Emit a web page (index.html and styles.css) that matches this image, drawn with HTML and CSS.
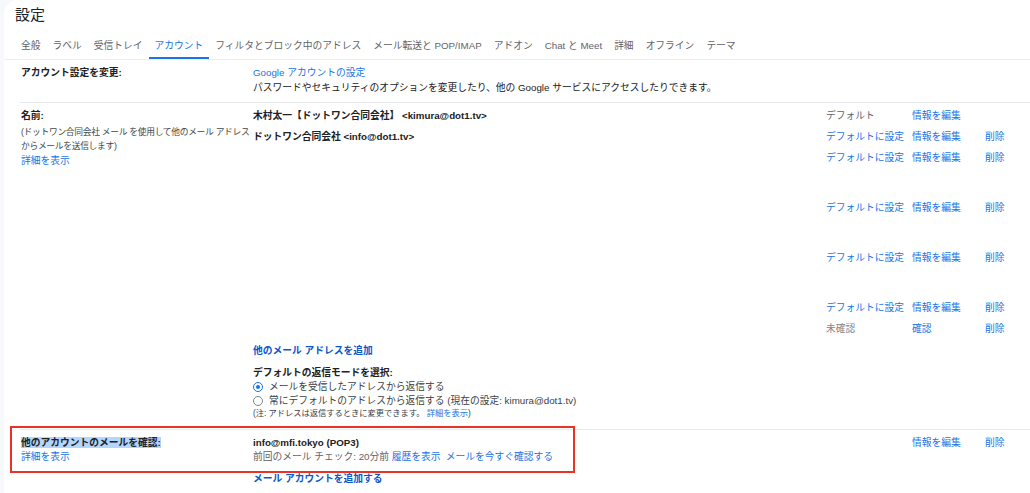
FILE: index.html
```html
<!DOCTYPE html>
<html lang="ja">
<head>
<meta charset="utf-8">
<title>設定</title>
<link rel="stylesheet" href="styles.css">
</head>
<body>
<div class="page">
  <div class="panel">
    <h1 class="title">設定</h1>
    <nav class="tabs">
      <span class="tab">全般</span>
      <span class="tab">ラベル</span>
      <span class="tab">受信トレイ</span>
      <span class="tab active">アカウント</span>
      <span class="tab">フィルタとブロック中のアドレス</span>
      <span class="tab">メール転送と POP/IMAP</span>
      <span class="tab">アドオン</span>
      <span class="tab">Chat と Meet</span>
      <span class="tab">詳細</span>
      <span class="tab">オフライン</span>
      <span class="tab">テーマ</span>
    </nav>

    <section class="row row-account">
      <div class="label"><div class="label-title">アカウント設定を変更:</div></div>
      <div class="value">
        <a class="link">Google アカウントの設定</a>
        <div class="text">パスワードやセキュリティのオプションを変更したり、他の Google サービスにアクセスしたりできます。</div>
      </div>
    </section>

    <section class="row row-names">
      <div class="label">
        <div class="label-title">名前:</div>
        <div class="label-desc">(ドットワン合同会社 メール を使用して他のメール アドレス<br>からメールを送信します)</div>
        <a class="link label-link">詳細を表示</a>
      </div>
      <div class="value">
        <div class="senders">
          <div class="entry">
            <span class="name">木村太一【ドットワン合同会社】 &lt;kimura@dot1.tv&gt;</span>
            <span class="status">デフォルト</span>
            <a class="link">情報を編集</a>
            <span></span>
          </div>
          <div class="entry">
            <span class="name">ドットワン合同会社 &lt;info@dot1.tv&gt;</span>
            <a class="link">デフォルトに設定</a>
            <a class="link">情報を編集</a>
            <a class="link">削除</a>
          </div>
          <div class="entry tall">
            <span class="name"></span>
            <a class="link">デフォルトに設定</a>
            <a class="link">情報を編集</a>
            <a class="link">削除</a>
          </div>
          <div class="entry tall short">
            <span class="name"></span>
            <a class="link">デフォルトに設定</a>
            <a class="link">情報を編集</a>
            <a class="link">削除</a>
          </div>
          <div class="entry tall">
            <span class="name"></span>
            <a class="link">デフォルトに設定</a>
            <a class="link">情報を編集</a>
            <a class="link">削除</a>
          </div>
          <div class="entry">
            <span class="name"></span>
            <a class="link">デフォルトに設定</a>
            <a class="link">情報を編集</a>
            <a class="link">削除</a>
          </div>
          <div class="entry last">
            <span class="name"></span>
            <span class="status muted">未確認</span>
            <a class="link">確認</a>
            <a class="link">削除</a>
          </div>
        </div>
        <a class="link strong">他のメール アドレスを追加</a>
        <div class="reply">
          <div class="reply-title">デフォルトの返信モードを選択:</div>
          <div class="radio-line"><span class="radio checked"></span>メールを受信したアドレスから返信する</div>
          <div class="radio-line"><span class="radio"></span>常にデフォルトのアドレスから返信する (現在の設定: kimura@dot1.tv)</div>
          <div class="note">(注: アドレスは返信するときに変更できます。 <a class="link">詳細を表示</a>)</div>
        </div>
      </div>
    </section>

    <section class="row row-pop">
      <div class="label">
        <div class="label-title"><span class="selected">他のアカウントのメールを確認:</span></div>
        <a class="link">詳細を表示</a>
      </div>
      <div class="value">
        <div class="entry">
          <div class="name">
            <div>info@mfi.tokyo (POP3)</div>
            <div class="check">前回のメール チェック: 20分前 <a class="link">履歴を表示</a>&nbsp;&nbsp;<a class="link">メールを今すぐ確認する</a></div>
          </div>
          <span></span>
          <a class="link">情報を編集</a>
          <a class="link">削除</a>
        </div>
        <a class="link strong add-account">メール アカウントを追加する</a>
      </div>
    </section>
  </div>
  <div class="annot-box"></div>
</div>
</body>
</html>
```

FILE: styles.css
```css
html, body {
  margin: 0;
  padding: 0;
  height: 493px;
  overflow: hidden;
  background: #f6f8fc;
}

body {
  font-family: "Liberation Sans", "Noto Sans CJK JP", sans-serif;
  font-size: 9.75px;
  line-height: 14.5px;
  color: #202124;
}

.page {
  position: relative;
  height: 493px;
}

.panel {
  margin-left: 4px;
  background: #ffffff;
  border-top-left-radius: 14px;
  height: 493px;
  overflow: hidden;
}

.title {
  margin: 0;
  padding-left: 11px;
  font-size: 15px;
  line-height: 30px;
  height: 30px;
  font-weight: 400;
  color: #202124;
}

.tabs {
  display: flex;
  padding-left: 11px;
  border-bottom: 1px solid #eceef1;
  height: 29px;
  box-sizing: content-box;
}

.tab {
  padding: 7.5px 6px 0;
  line-height: 15px;
  color: #5f6368;
  white-space: nowrap;
  border-bottom: 2px solid transparent;
  height: 19.5px;
}

.tab.active {
  color: #1a73e8;
  border-bottom-color: #1a73e8;
}

.row {
  display: grid;
  grid-template-columns: 232px 1fr;
  margin-left: 16px;
  padding-left: 1px;
  padding-top: 6px;
  border-top: 1px solid #e8eaed;
}

.row-account {
  border-top: none;
  padding-bottom: 7px;
}

.row-names {
  padding-bottom: 9.5px;
}

.label-title {
  font-weight: 700;
  color: #202124;
}

.label-desc {
  margin-top: 1.5px;
  font-size: 8.75px;
  letter-spacing: -0.3px;
  line-height: 14px;
  color: #444746;
  white-space: nowrap;
}

.label-link {
  display: block;
  margin-top: 0.5px;
}

.link {
  color: #1a73e8;
  text-decoration: none;
  cursor: pointer;
}

.link.strong {
  display: block;
  font-weight: 700;
  color: #0b57d0;
  line-height: 14.5px;
}

.text {
  color: #202124;
}

.senders {
  display: flex;
  flex-direction: column;
}

.entry {
  display: grid;
  grid-template-columns: 573px 86px 73px auto;
  height: 21px;
}

.entry.tall {
  height: 50px;
}

.entry.tall.short {
  height: 49.5px;
}

.entry.last {
  height: 22.5px;
}

.name {
  font-weight: 700;
  color: #202124;
  white-space: nowrap;
}

.status {
  color: #5f6368;
}

.status.muted {
  color: #80868b;
}

.reply {
  margin-top: 7px;
}

.reply-title {
  font-weight: 700;
  color: #202124;
}

.radio-line {
  display: flex;
  align-items: center;
  line-height: 14px;
  color: #3c4043;
}

.radio {
  width: 10px;
  height: 10px;
  box-sizing: border-box;
  border-radius: 50%;
  border: 1px solid #80868b;
  margin-right: 6px;
  display: flex;
  align-items: center;
  justify-content: center;
  background: #fff;
}

.radio.checked {
  border: 1.5px solid #1a73e8;
}

.radio.checked::after {
  content: "";
  width: 4px;
  height: 4px;
  border-radius: 50%;
  background: #1a73e8;
}

.note {
  font-size: 8.25px;
  line-height: 11px;
  color: #3c4043;
}

.row-pop .entry {
  height: auto;
}

.row-pop .name > div:first-child {
  font-weight: 700;
}

.check {
  font-weight: 400;
  color: #5f6368;
}

.add-account {
  margin-top: 7px;
}

.selected {
  background: #b4d5fd;
}

.annot-box {
  position: absolute;
  left: 10px;
  top: 426px;
  width: 565px;
  height: 47px;
  box-sizing: border-box;
  border: 2px solid #ea3323;
  pointer-events: none;
}
```
